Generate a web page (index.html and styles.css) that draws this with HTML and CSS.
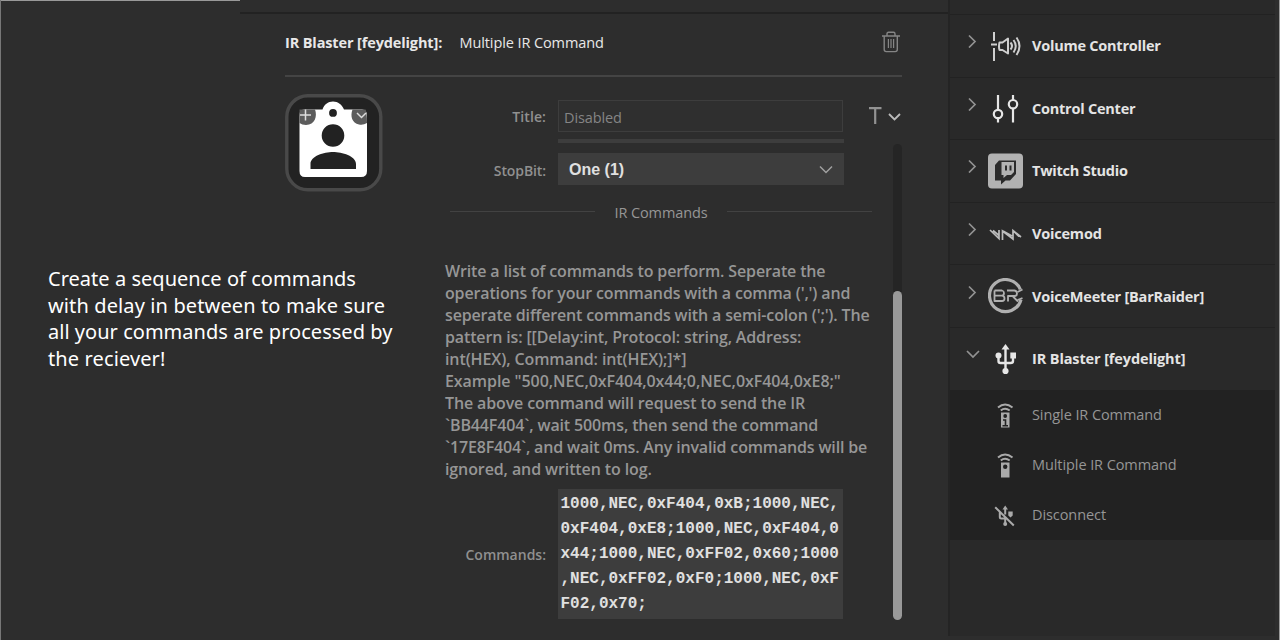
FILE: index.html
```html
<!DOCTYPE html>
<html lang="en">
<head>
<meta charset="utf-8">
<title>IR Blaster</title>
<link rel="stylesheet" href="styles.css">
</head>
<body>
<div class="app">
  <main class="editor">
    <div class="topline"><i class="topline-light"></i><i class="topline-dark"></i></div>
    <header class="head">
      <b class="head-plugin">IR Blaster [feydelight]:</b>
      <span class="head-action">Multiple IR Command</span>
      <svg class="trash" width="20" height="22" viewBox="0 0 20 22" fill="none" stroke="#858585" stroke-width="1.4"><path d="M1 5H19M6 5V3Q6 1.3 7.5 1.3H12.5Q14 1.3 14 3V5M3.2 5V18.5Q3.2 20.6 5.3 20.6H14.2Q16.3 20.6 16.3 18.5V5"/><path d="M7.4 8V17M10 8V17M12.6 8V17" stroke-width="1.2"/></svg>
    </header>
    <div class="content">
      <div class="left">
        <svg class="key" width="98" height="98" viewBox="0 0 98 98">
          <rect x="1.8" y="1.8" width="94" height="94" rx="21" fill="#222" stroke="#494949" stroke-width="3.4"/>
          <path fill="#fff" fill-rule="evenodd" d="M20 15.5H37.5C39 10.500 43 7.500 48 7.500S57 10.500 59 15.500H77Q82 16 82 21V77Q82 83 76 83H20Q14.500 83 14.500 77V21Q14.500 15.500 20 15.500ZM48 15A3.900 3.900 0 1 0 48 22.800A3.900 3.900 0 1 0 48 15ZM48 30.200A11.300 11.300 0 1 0 48 52.800A11.300 11.300 0 1 0 48 30.200ZM25.500 75H71V70C71 62 57 58 48 58S25.500 62 25.500 70Z"/>
          <path fill="#5c5c5c" d="M14.500 15.500H30C32.500 22 30 31 21 31Q17 31 14.500 29ZM67.500 15.500H80.500Q82 18 82 29Q78 31.500 74 30.500C67 29 65 22 67.500 15.500Z"/>
          <path fill="none" stroke="#ddd" stroke-width="1.500" d="M15 21H26M20.500 15.500V26.500M72 19L76.500 23.500L81 19"/>
        </svg>
        <p class="caption"><span class="c1">Create a sequence of commands</span><span class="c2">with delay in between to make sure</span><span class="c3">all your commands are processed by</span><span class="c4">the reciever!</span></p>
      </div>
      <div class="form">
        <div class="row title-row">
          <label class="label l-title">Title:</label>
          <div class="input">Disabled</div>
          <svg class="font-menu" width="34" height="22" viewBox="0 0 34 22" fill="none" stroke="#929292"><path stroke-width="2.200" d="M1 3.200H13.500M7.200 3V19"/><path stroke="#bbb" stroke-width="1.800" d="M21 9L26.500 14.500L32 9"/></svg>
        </div>
        <div class="scroll">
          <div class="fields">
            <div class="cut"></div>
            <div class="row stop-row">
              <label class="label l-stop">StopBit:</label>
              <div class="select"><b>One (1)</b><svg width="14" height="10" viewBox="0 0 14 10" fill="none" stroke="#a0a0a0" stroke-width="1.500"><path d="M1 1.500L7 7.500L13 1.500"/></svg></div>
            </div>
            <div class="divider"><i></i><span>IR Commands</span><i></i></div>
            <p class="help"><span class="h1">Write a list of commands to perform. Seperate the</span><span class="h2">operations for your commands with a comma (',') and</span><span class="h3">seperate different commands with a semi-colon (';'). The</span><span class="h4">pattern is: [[Delay:int, Protocol: string, Address:</span><span class="h5">int(HEX), Command: int(HEX);]*]</span><span class="h6">Example "500,NEC,0xF404,0x44;0,NEC,0xF404,0xE8;"</span><span class="h7">The above command will request to send the IR</span><span class="h8">`BB44F404`, wait 500ms, then send the command</span><span class="h9">`17E8F404`, and wait 0ms. Any invalid commands will be</span><span class="h10">ignored, and written to log.</span></p>
            <div class="row cmd-row">
              <label class="label l-cmd">Commands:</label>
              <div class="area">1000,NEC,0xF404,0xB;1000,NEC,<br>0xF404,0xE8;1000,NEC,0xF404,0<br>x44;1000,NEC,0xFF02,0x60;1000<br>,NEC,0xFF02,0xF0;1000,NEC,0xF<br>F02,0x70;</div>
            </div>
          </div>
          <div class="track"><div class="thumb"></div></div>
        </div>
      </div>
    </div>
  </main>
  <aside class="side">
    <div class="plugin">
      <svg class="chev" viewBox="0 0 12 14"><path d="M2 1.500L8 7.500L2 13.500"/></svg>
      <svg class="ico" viewBox="0 0 36 36" fill="none" stroke="#cfcfcf" stroke-width="2"><path d="M6 4V13M3 16.500H9M6 20V33"/><path stroke-linejoin="round" d="M11.500 14.500H14.500L20 10.500V25.500L14.500 22H11.500Q10.500 18.500 11.500 14.500ZM22.500 14.500Q25.500 18 22.500 21.500M25.500 12Q30 18 25.500 24.500M28.500 9.500Q34.500 18 28.500 27"/></svg>
      <b class="p1">Volume Controller</b>
    </div>
    <div class="plugin">
      <svg class="chev" viewBox="0 0 12 14"><path d="M2 1.500L8 7.500L2 13.500"/></svg>
      <svg class="ico" viewBox="0 0 36 36" fill="none" stroke="#e6e6e6" stroke-width="2.200"><path d="M10 5V19.500M10 28.500V32.500M25 5V10M25 18.500V32.500"/><circle cx="10" cy="24" r="4.200"/><circle cx="25" cy="14.200" r="4.200"/></svg>
      <b class="p2">Control Center</b>
    </div>
    <div class="plugin">
      <svg class="chev" viewBox="0 0 12 14"><path d="M2 1.500L8 7.500L2 13.500"/></svg>
      <svg class="ico" viewBox="0 0 36 36"><rect x="0" y="0.500" width="35" height="35" rx="4" fill="#b2b2b2"/><path fill="#2b2b2b" d="M11 7.500H28V21L22 27.500H17.500L13 31.500V27.500H7V12Z"/><path fill="#b2b2b2" d="M13.500 9H26V19L23 22H19L15.500 25V22H13.500Z"/><path stroke="#2b2b2b" stroke-width="2" d="M18 12.500V17.500M22.500 12.500V17.500"/></svg>
      <b class="p3">Twitch Studio</b>
    </div>
    <div class="plugin">
      <svg class="chev" viewBox="0 0 12 14"><path d="M2 1.500L8 7.500L2 13.500"/></svg>
      <svg class="ico" viewBox="0 0 36 36" fill="none" stroke="#bcbcbc" stroke-width="1.700"><path d="M2 14L11 22.500V14M14.500 24V15L25 23V14.500L33 21M5 14.500L11 19.500M15 15L24 20M25.500 15L31 20.500"/></svg>
      <b class="p4">Voicemod</b>
    </div>
    <div class="plugin">
      <svg class="chev" viewBox="0 0 12 14"><path d="M2 1.500L8 7.500L2 13.500"/></svg>
      <svg class="ico" viewBox="0 0 36 36" fill="none" stroke="#b0b0b0"><path stroke-width="3.200" d="M32.300 11.500A16 16 0 1 0 33 21.500"/><path stroke-width="1.800" d="M29.500 14L34.500 11.500M34.500 20L29.500 22"/><path stroke-width="1.800" stroke-linejoin="round" d="M6.500 12.500H14Q16 13 16 15Q16 17.500 14 17.700Q16.500 18 16.500 20.500Q16.500 23 14 23H6.500V12.500M6.500 17.700H14M19 12.500H26.500Q29 13 29 15.500Q29 18 26.500 18H20V23.500M25 18.500L30 23.500"/></svg>
      <b class="p5">VoiceMeeter [BarRaider]</b>
    </div>
    <div class="plugin">
      <svg class="chev open" viewBox="0 0 14 12"><path d="M1 2L7 8L13 2"/></svg>
      <svg class="ico" viewBox="0 0 36 36" fill="#e6e6e6"><path d="M17.500 3L21.500 8.500H13.500Z"/><path fill="none" stroke="#e6e6e6" stroke-width="2.400" d="M17.500 7V30M10.500 14V20Q10.500 22 12.500 22H22.500Q25 22 25 20V14"/><circle cx="17.500" cy="30" r="3.100"/><circle cx="10.500" cy="14.500" r="3"/><path d="M22.300 11.500H28V17.500H22.300Z"/></svg>
      <b class="p6">IR Blaster [feydelight]</b>
    </div>
    <div class="actions">
      <div class="action">
        <svg class="aico" viewBox="0 0 24 28"><path fill="none" stroke="#aaa" stroke-width="2" d="M5 6.500Q12 0.500 19.500 6.500M7.800 9.500Q12 6 16.700 9.500"/><path fill="#aaa" d="M8 11.500H16.500V26.500H8Z"/><circle cx="12.200" cy="15" r="1.900" fill="#222"/><path fill="none" stroke="#222" stroke-width="1.600" d="M10 19H12.500V24.500M9.500 24.700H15"/></svg>
        <span class="a1">Single IR Command</span>
      </div>
      <div class="action">
        <svg class="aico" viewBox="0 0 24 28"><path fill="none" stroke="#aaa" stroke-width="2" d="M5 6.500Q12 0.500 19.500 6.500M7.800 9.500Q12 6 16.700 9.500"/><path fill="#aaa" d="M8 11.500H16.500V26.500H8Z"/><circle cx="12.200" cy="15.800" r="2.200" fill="#222"/></svg>
        <span class="a2">Multiple IR Command</span>
      </div>
      <div class="action">
        <svg class="aico" viewBox="0 0 24 28"><g fill="#aaa"><path d="M12.200 4.500L15 8.500H9.500Z"/><circle cx="12.200" cy="23" r="2"/><path d="M15.300 10.500H19.700V14.500L17.500 16.500L15.300 14.500Z"/></g><path fill="none" stroke="#aaa" stroke-width="2" d="M2.200 6.200L20.800 24.500M12.200 7.500V13.500M12.200 17V23M6.800 11V16Q6.800 17.500 8.300 17.500H12"/></svg>
        <span class="a3">Disconnect</span>
      </div>
    </div>
  </aside>
</div>
</body>
</html>
```

FILE: styles.css
```css
* { box-sizing: border-box; }
body { margin: 0; background: #2d2d2d; font-family: "Open Sans", "Noto Sans", sans-serif; font-size: 14.5px; color: #969696; }
.app { display: flex; width: 1280px; height: 640px; overflow: hidden; border-left: 1px solid #777; border-right: 1px solid #999; white-space: nowrap; }
.editor { width: 947px; flex: none; }
.topline { display: flex; height: 14px; align-items: flex-start; }
.topline-light { width: 239px; height: 1px; background: #999; }
.topline-dark { flex: 1; height: 2px; margin-top: 12px; background: #222; }
.head { display: flex; align-items: center; margin: 0 46px 0 284px; height: 63px; padding-bottom: 5px; border-bottom: 2px solid #444; color: #e8e8e8; }
.head-plugin { width: 174.5px; letter-spacing: -.13px; }
.head-action { letter-spacing: -.1px; }
.trash { margin: -1px 1px 0 auto; }
.content { display: flex; }
.left { width: 444px; flex: none; padding-top: 17px; }
.key { display: block; margin-left: 284px; }
.caption { margin: 74px 0 0 47px; font: 20px/26.7px "Noto Sans", sans-serif; color: #fff; }
.caption span, .help span { display: block; width: max-content; }
.c1, .c3 { letter-spacing: .03px; }
.c2, .c4 { letter-spacing: .12px; }
.form { width: 457px; flex: none; padding-top: 23px; }
.row { display: flex; align-items: center; }
.label { width: 101px; margin-right: 12px; text-align: right; flex: none; font-weight: 600; font-size: 14px; color: #909090; }
.l-title { padding-top: 1px; letter-spacing: .1px; }
.l-stop { padding-top: 2px; letter-spacing: -.1px; }
.title-row { height: 32px; }
.input { width: 285px; height: 32px; padding: 5px; line-height: 23px; border: 1px solid #3d3d3d; background: #2f2f2f; color: #858585; letter-spacing: -.1px; }
.font-menu { margin-left: 25px; }
.scroll { display: flex; justify-content: space-between; padding-top: 7px; }
.fields { width: 430px; }
.cut { width: 286px; height: 4px; margin-left: 113px; background: #3d3d3d; }
.stop-row { margin-top: 10px; }
.select { width: 286px; height: 32px; padding: 1px 11px 0; display: flex; align-items: center; justify-content: space-between; background: #3d3d3d; color: #e0e0e0; font: 16px "Liberation Sans", sans-serif; }
.divider { display: flex; align-items: center; justify-content: space-between; width: 422px; height: 22px; margin: 16px 0 0 5px; }
.divider span { letter-spacing: -.1px; }
.divider i { width: 145px; height: 1px; margin-bottom: 2px; background: #424242; }
.help { margin: 37px 0 0; font-size: 16px; line-height: 22px; font-weight: 600; }
.h1, .h2, .h3, .h4 { letter-spacing: -.145px; }
.h5, .h10 { letter-spacing: -.105px; }
.h6 { letter-spacing: -.065px; }
.h7, .h8 { letter-spacing: -.135px; }
.h9 { letter-spacing: -.165px; }
.cmd-row { margin-top: 9px; }
.area { width: 285px; height: 130px; padding: 3px 0 0 2.5px; background: #3d3d3d; color: #e0e0e0; font: bold 16px/25px "Liberation Mono", monospace; }
.track { width: 9px; height: 476px; margin-top: 5px; padding-top: 147px; border-radius: 5px; background: #252525; }
.thumb { height: 329px; border-radius: 5px; background: #999; }
.side { width: 331px; flex: none; height: 636px; padding-top: 14px; background: #292929; border-left: 2px solid #242424; border-right: 4px solid #2d2d2d; }
.plugin { display: flex; height: 62.6px; padding-left: 17px; align-items: center; border-top: 1px solid #222; color: #e4e4e4; }
.chev { width: 12px; height: 14px; margin: -9px 9px 0 0; fill: none; stroke: #929292; stroke-width: 1.7; }
.chev.open { width: 14px; height: 12px; margin: -8px 8px 0 -1px; }
.ico { width: 36px; height: 36px; margin-right: 8px; flex: none; }
.p1, .p2, .p3 { letter-spacing: -.23px; }
.p4, .p5 { letter-spacing: -.2px; }
.p6 { letter-spacing: -.12px; }
.actions { height: 150px; background: #222; }
.action { display: flex; align-items: center; height: 50px; padding-left: 43px; }
.action span { letter-spacing: -.08px; }
.aico { width: 24px; height: 28px; margin-right: 15px; }
```
